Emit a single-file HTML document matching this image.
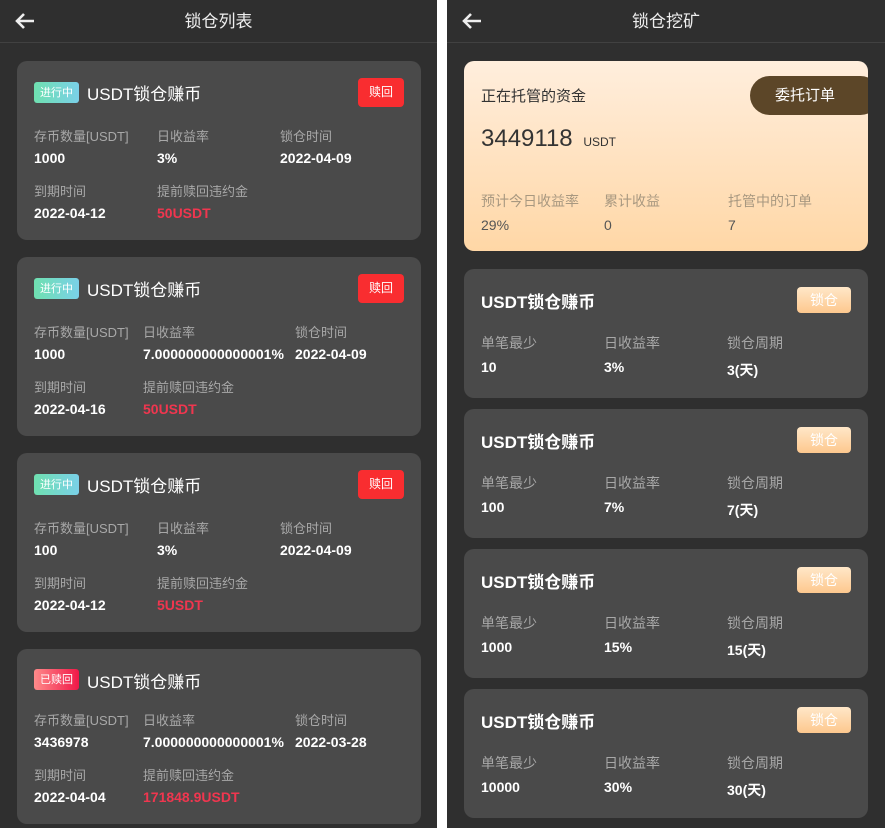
<!DOCTYPE html>
<html><head><meta charset="utf-8"><style>
*{margin:0;padding:0;box-sizing:border-box}
body{width:885px;height:828px;background:#fff;position:relative;overflow:hidden;font-family:"Liberation Sans","Noto Sans CJK SC",sans-serif}
.p{position:absolute;top:0;height:828px;background:#2f2f2f}
.hd{position:absolute;left:0;right:0;top:0;height:43px;border-bottom:1px solid #414141;color:#eee;font-size:17px;text-align:center;line-height:43px}
.hd svg{position:absolute;left:14px;top:12px}
.c{position:absolute;background:#4a4a4a;border-radius:10px}
.a{position:absolute;white-space:nowrap}
.l{font-size:13px;color:#a8a8a8}
.v{font-size:14px;color:#fff;font-weight:bold}
.r{color:#f0364f}
.t{font-size:17px;color:#fff}
.tag{position:absolute;left:17px;top:21px;width:45px;height:21px;border-radius:3px;font-size:11px;color:#fff;text-align:center;line-height:22px;background:linear-gradient(90deg,#6fe0b0,#7ad0e8)}
.tag.red{background:linear-gradient(90deg,#ff8a8a,#f01848)}
.btn{position:absolute;left:341px;top:17px;width:46px;height:29px;border-radius:4px;background:#f92d30;color:#fff;font-size:12px;text-align:center;line-height:29px}
.lk{position:absolute;left:333px;top:18px;width:54px;height:26px;border-radius:4px;background:linear-gradient(180deg,#ffe7c8,#fdc88e);color:#fff;font-size:14px;text-align:center;line-height:26px}
</style></head><body>
<div class="p" style="left:0;width:437px">
<div class="hd"><svg width="22" height="18" viewBox="0 0 22 18"><path d="M20 9H3M10 2L3 9l7 7" stroke="#eee" stroke-width="2.6" fill="none"/></svg>锁仓列表</div>

<div class="c" style="left:17px;top:61px;width:404px;height:179px">
<div class="tag">进行中</div><div class="a t" style="left:70px;top:19px">USDT锁仓赚币</div><div class="btn">赎回</div>
<div class="a l" style="left:17px;top:65px">存币数量[USDT]</div><div class="a l" style="left:140px;top:65px">日收益率</div><div class="a l" style="left:263px;top:65px">锁仓时间</div>
<div class="a v" style="left:17px;top:89px">1000</div><div class="a v" style="left:140px;top:89px">3%</div><div class="a v" style="left:263px;top:89px">2022-04-09</div>
<div class="a l" style="left:17px;top:120px">到期时间</div><div class="a l" style="left:140px;top:120px">提前赎回违约金</div>
<div class="a v" style="left:17px;top:144px">2022-04-12</div><div class="a v r" style="left:140px;top:144px">50USDT</div>
</div>

<div class="c" style="left:17px;top:257px;width:404px;height:179px">
<div class="tag">进行中</div><div class="a t" style="left:70px;top:19px">USDT锁仓赚币</div><div class="btn">赎回</div>
<div class="a l" style="left:17px;top:65px">存币数量[USDT]</div><div class="a l" style="left:126px;top:65px">日收益率</div><div class="a l" style="left:278px;top:65px">锁仓时间</div>
<div class="a v" style="left:17px;top:89px">1000</div><div class="a v" style="left:126px;top:89px">7.000000000000001%</div><div class="a v" style="left:278px;top:89px">2022-04-09</div>
<div class="a l" style="left:17px;top:120px">到期时间</div><div class="a l" style="left:126px;top:120px">提前赎回违约金</div>
<div class="a v" style="left:17px;top:144px">2022-04-16</div><div class="a v r" style="left:126px;top:144px">50USDT</div>
</div>

<div class="c" style="left:17px;top:453px;width:404px;height:179px">
<div class="tag">进行中</div><div class="a t" style="left:70px;top:19px">USDT锁仓赚币</div><div class="btn">赎回</div>
<div class="a l" style="left:17px;top:65px">存币数量[USDT]</div><div class="a l" style="left:140px;top:65px">日收益率</div><div class="a l" style="left:263px;top:65px">锁仓时间</div>
<div class="a v" style="left:17px;top:89px">100</div><div class="a v" style="left:140px;top:89px">3%</div><div class="a v" style="left:263px;top:89px">2022-04-09</div>
<div class="a l" style="left:17px;top:120px">到期时间</div><div class="a l" style="left:140px;top:120px">提前赎回违约金</div>
<div class="a v" style="left:17px;top:144px">2022-04-12</div><div class="a v r" style="left:140px;top:144px">5USDT</div>
</div>

<div class="c" style="left:17px;top:649px;width:404px;height:175px">
<div class="tag red" style="top:20px">已赎回</div><div class="a t" style="left:70px;top:19px">USDT锁仓赚币</div>
<div class="a l" style="left:17px;top:61px">存币数量[USDT]</div><div class="a l" style="left:126px;top:61px">日收益率</div><div class="a l" style="left:278px;top:61px">锁仓时间</div>
<div class="a v" style="left:17px;top:85px">3436978</div><div class="a v" style="left:126px;top:85px">7.000000000000001%</div><div class="a v" style="left:278px;top:85px">2022-03-28</div>
<div class="a l" style="left:17px;top:116px">到期时间</div><div class="a l" style="left:126px;top:116px">提前赎回违约金</div>
<div class="a v" style="left:17px;top:140px">2022-04-04</div><div class="a v r" style="left:126px;top:140px">171848.9USDT</div>
</div>
</div>

<div class="p" style="left:447px;width:438px">
<div class="hd"><svg width="22" height="18" viewBox="0 0 22 18"><path d="M20 9H3M10 2L3 9l7 7" stroke="#eee" stroke-width="2.6" fill="none"/></svg>锁仓挖矿</div>
<div class="c" style="left:17px;top:61px;width:404px;height:190px;background:linear-gradient(180deg,#ffeedd,#ffd7a6);overflow:hidden">
<div class="a" style="left:17px;top:24px;font-size:15px;color:#333">正在托管的资金</div>
<div style="position:absolute;left:286px;top:15px;width:130px;height:39px;border-radius:20px;background:#5c4628;color:#fff;font-size:15px;line-height:39px;padding-left:25px">委托订单</div>
<div class="a" style="left:17px;top:64px;font-size:24px;color:#333">3449118 <span style="font-size:12px;margin-left:4px">USDT</span></div>
<div class="a" style="left:17px;top:130px;font-size:14px;color:#a89880">预计今日收益率</div>
<div class="a" style="left:140px;top:130px;font-size:14px;color:#a89880">累计收益</div>
<div class="a" style="left:264px;top:130px;font-size:14px;color:#a89880">托管中的订单</div>
<div class="a" style="left:17px;top:156px;font-size:14px;color:#555">29%</div>
<div class="a" style="left:140px;top:156px;font-size:14px;color:#555">0</div>
<div class="a" style="left:264px;top:156px;font-size:14px;color:#555">7</div>
</div>

<div class="c" style="left:17px;top:269px;width:404px;height:129px">
<div class="a t" style="left:17px;top:19px;font-weight:bold">USDT锁仓赚币</div><div class="lk">锁仓</div>
<div class="a l" style="left:17px;top:64px;font-size:14px">单笔最少</div><div class="a l" style="left:140px;top:64px;font-size:14px">日收益率</div><div class="a l" style="left:263px;top:64px;font-size:14px">锁仓周期</div>
<div class="a v" style="left:17px;top:90px">10</div><div class="a v" style="left:140px;top:90px">3%</div><div class="a v" style="left:263px;top:91px">3(天)</div>
</div>
<div class="c" style="left:17px;top:409px;width:404px;height:129px">
<div class="a t" style="left:17px;top:19px;font-weight:bold">USDT锁仓赚币</div><div class="lk">锁仓</div>
<div class="a l" style="left:17px;top:64px;font-size:14px">单笔最少</div><div class="a l" style="left:140px;top:64px;font-size:14px">日收益率</div><div class="a l" style="left:263px;top:64px;font-size:14px">锁仓周期</div>
<div class="a v" style="left:17px;top:90px">100</div><div class="a v" style="left:140px;top:90px">7%</div><div class="a v" style="left:263px;top:91px">7(天)</div>
</div>
<div class="c" style="left:17px;top:549px;width:404px;height:129px">
<div class="a t" style="left:17px;top:19px;font-weight:bold">USDT锁仓赚币</div><div class="lk">锁仓</div>
<div class="a l" style="left:17px;top:64px;font-size:14px">单笔最少</div><div class="a l" style="left:140px;top:64px;font-size:14px">日收益率</div><div class="a l" style="left:263px;top:64px;font-size:14px">锁仓周期</div>
<div class="a v" style="left:17px;top:90px">1000</div><div class="a v" style="left:140px;top:90px">15%</div><div class="a v" style="left:263px;top:91px">15(天)</div>
</div>
<div class="c" style="left:17px;top:689px;width:404px;height:129px">
<div class="a t" style="left:17px;top:19px;font-weight:bold">USDT锁仓赚币</div><div class="lk">锁仓</div>
<div class="a l" style="left:17px;top:64px;font-size:14px">单笔最少</div><div class="a l" style="left:140px;top:64px;font-size:14px">日收益率</div><div class="a l" style="left:263px;top:64px;font-size:14px">锁仓周期</div>
<div class="a v" style="left:17px;top:90px">10000</div><div class="a v" style="left:140px;top:90px">30%</div><div class="a v" style="left:263px;top:91px">30(天)</div>
</div>
</div>
</body></html>
